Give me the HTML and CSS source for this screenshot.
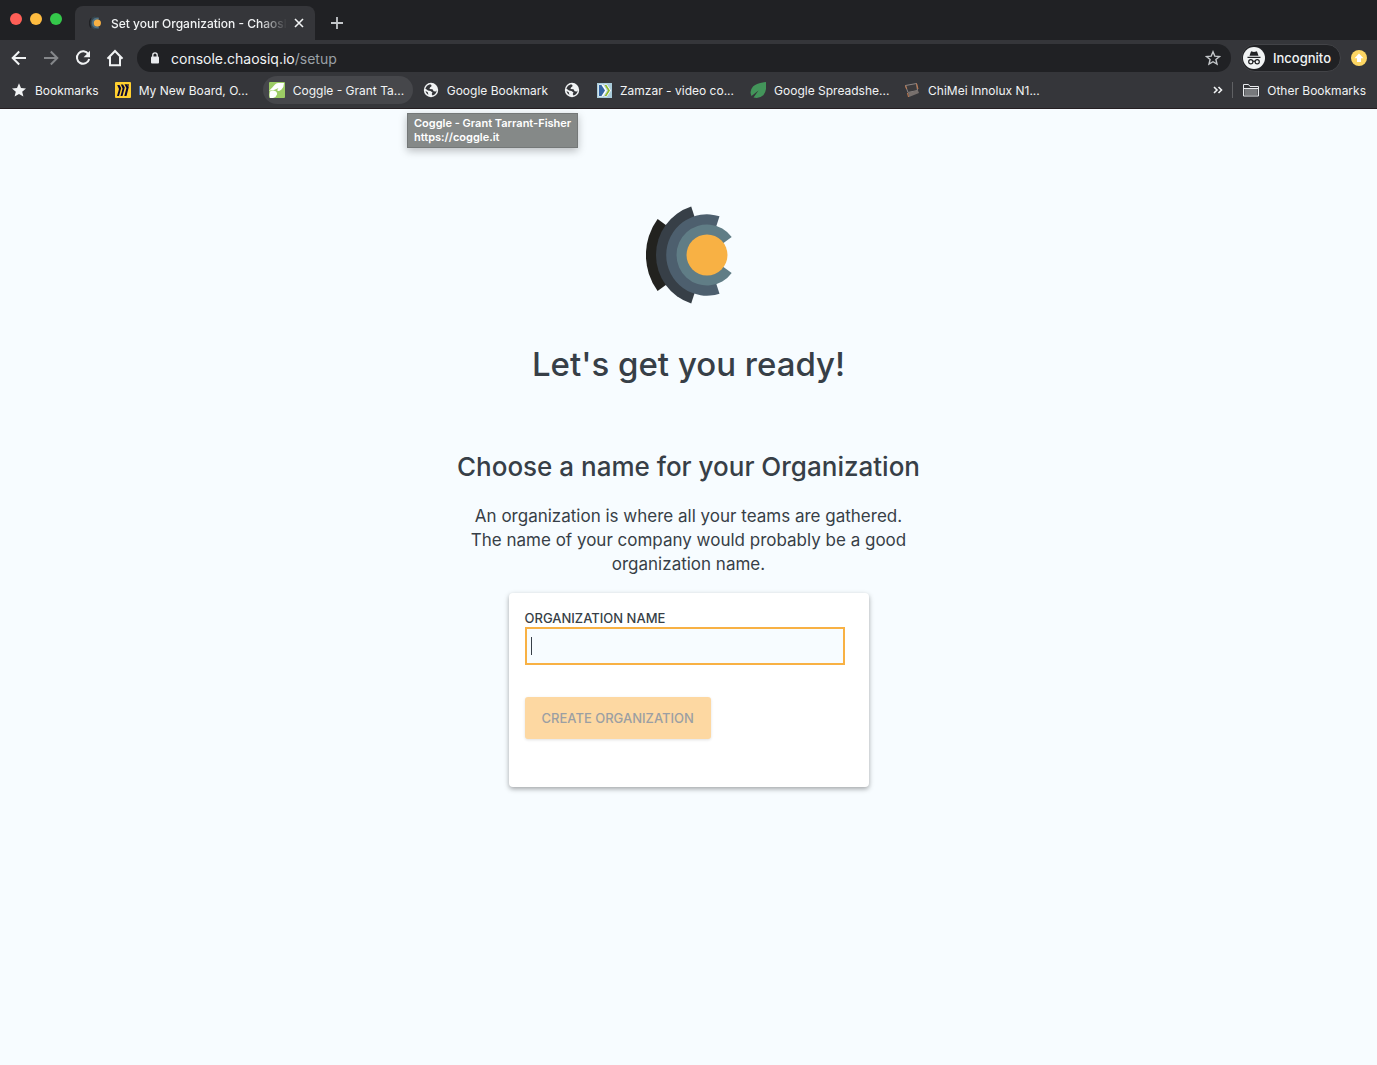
FILE: index.html
```html
<!DOCTYPE html>
<html lang="en">
<head>
<meta charset="utf-8">
<title>Set your Organization - ChaosIQ</title>
<link rel="stylesheet" href="styles.css">
</head>
<body>
<header class="browser">
  <div class="tabstrip">
    <div class="lights">
      <span class="light light-red"></span>
      <span class="light light-yellow"></span>
      <span class="light light-green"></span>
    </div>
    <div class="tab">
      <svg class="favicon" viewBox="-61 -51 102 102" aria-hidden="true">
        <path fill="#202124" d="M0 0L-49.4-35.9A61 61 0 0 0-49.4 35.9Z"/>
        <path fill="#37474f" d="M0 0L-15.8-48.5A51 51 0 0 0-15.8 48.5Z"/>
        <path fill="#4d6f82" d="M0 0L12.5-38.7A40.7 40.7 0 1 0 12.5 38.7Z"/>
        <circle r="26" fill="#f8b144"/>
      </svg>
      <span class="tab-title">Set your Organization - ChaosI</span>
      <button class="icon-button tab-close" aria-label="Close tab">
        <svg width="10" height="10" viewBox="0 0 10 10"><path d="M1 1l8 8M9 1l-8 8" stroke="#f1f3f4" stroke-width="1.6" fill="none"/></svg>
      </button>
    </div>
    <button class="icon-button new-tab" aria-label="New tab">
      <svg width="14" height="14" viewBox="0 0 14 14"><path d="M7 1v12M1 7h12" stroke="#c4c7ca" stroke-width="1.8" fill="none"/></svg>
    </button>
  </div>

  <div class="toolbar">
    <nav class="nav-buttons" aria-label="Browser">
      <button class="icon-button" aria-label="Back"><svg width="16" height="16" viewBox="0 0 16 16"><path d="M15 8H2M8.200 1.500L1.700 8l6.500 6.500" stroke="#f1f3f4" stroke-width="2" fill="none"/></svg></button>
      <button class="icon-button" aria-label="Forward"><svg width="16" height="16" viewBox="0 0 16 16"><path d="M1 8h13M7.800 1.500L14.300 8l-6.500 6.500" stroke="#85878a" stroke-width="2" fill="none"/></svg></button>
      <button class="icon-button" aria-label="Reload"><svg width="16" height="16" viewBox="0 0 16 16"><path d="M13.400 4.200A6.200 6.200 0 1 0 14.200 9" stroke="#f1f3f4" stroke-width="2" fill="none"/><path d="M15 .8v6.400H8.600Z" fill="#f1f3f4"/></svg></button>
      <button class="icon-button" aria-label="Home"><svg width="18" height="18" viewBox="0 0 18 18"><path d="M1.500 9.800L9 2l7.500 7.800M4 8v8.200h10V8" stroke="#f1f3f4" stroke-width="2" fill="none"/></svg></button>
    </nav>
    <div class="address">
      <svg width="10" height="12" viewBox="0 0 10 12" aria-hidden="true"><rect x="1" y="4.500" width="8" height="7" rx="1" fill="#e8eaed"/><path d="M2.800 5V3a2.200 2.200 0 0 1 4.400 0v2" stroke="#e8eaed" stroke-width="1.300" fill="none"/></svg>
      <span class="url">console.chaosiq.io<span class="url-path">/setup</span></span>
      <button class="icon-button bookmark-star" aria-label="Bookmark this page"><svg width="16" height="16" viewBox="0 0 16 16"><path d="M8 1.800l1.800 4.300 4.700.4-3.600 3 1.100 4.600L8 11.700l-4 2.400 1.100-4.600-3.600-3 4.700-.4Z" stroke="#c4c7ca" stroke-width="1.400" fill="none"/></svg></button>
    </div>
    <button class="incognito">
      <svg width="22" height="22" viewBox="0 0 22 22" aria-hidden="true"><circle cx="11" cy="11" r="11" fill="#f1f3f4"/><path fill="#202124" d="M6.500 8.700L7.800 5q.3-.8 1.100-.6l2.100.5 2.100-.5q.8-.2 1.100.6l1.300 3.700ZM4.500 9.700h13v1.200h-13Z"/><g fill="none" stroke="#202124" stroke-width="1.200"><circle cx="7.800" cy="14.700" r="2.100"/><circle cx="14.200" cy="14.700" r="2.100"/><path d="M9.900 14.500q1.100-.8 2.200 0"/></g></svg>
      <span>Incognito</span>
    </button>
    <button class="icon-button" aria-label="Update available"><svg width="16" height="16" viewBox="0 0 16 16"><circle cx="8" cy="8" r="8" fill="#fdd663"/><path fill="#fff" d="M8 3.500l4.500 4.700H10V12H6V8.200H3.500Z"/></svg></button>
  </div>

  <nav class="bookmarks" aria-label="Bookmarks">
    <a class="bookmark" href="#"><svg viewBox="0 0 16 16"><path fill="#f1f3f4" d="M8 1.300l2 4.700 5 .4-3.800 3.300 1.200 4.900L8 12l-4.400 2.600 1.200-4.900L1 6.400 6 6Z"/></svg><span>Bookmarks</span></a>
    <a class="bookmark bookmark-wide" href="#"><svg viewBox="0 0 16 16"><rect width="16" height="16" rx="1" fill="#ffd02f"/><path fill="#0b0733" d="M2.200 3H4.500L6.200 6 4 14H2L4 7ZM5.800 2.500H8L9.800 5.500 7.500 14H5.500L7.600 6.500ZM9.500 2.200h2.300L13.800 5 11.500 14H9.300L11.400 6ZM12 2h1.500l.6 2.500Z"/></svg><span>My New Board, O...</span></a>
    <a class="bookmark bookmark-wide bookmark-hover" href="#"><svg viewBox="0 0 16 16"><rect width="16" height="16" rx="1" fill="#9ccc65"/><path fill="#fff" d="M6 2.500Q7 1 9 1h6q0 4-2.500 6.500Q10 9.500 8.500 9q-.5-1.500 1-3L5 8Q3 8 0 8.800 3.500 5.500 6 2.500ZM1 9.500q3-1.500 5-.5 2.500 1 2 3.500-1 3-4 3.500H1q-1-3 0-6.500Z"/></svg><span>Coggle - Grant Ta...</span></a>
    <a class="bookmark" href="#"><svg viewBox="0 0 16 16"><circle cx="8" cy="8" r="7.200" fill="#f1f3f4"/><path fill="#35363a" d="M7 2.300q2 .3 1.500 1.900L7 5.500 6.500 7l3 .2 1.200 2 2.300.3.7-1.600Q13.500 12 9.500 13.600L8.700 12l.8-1.500L7.500 9 5 8.600 2.300 6.400Q3.400 3.200 7 2.300ZM2.500 9l2.300 1.300.6 2.700Q3 11.800 2.500 9Z"/></svg><span>Google Bookmark</span></a>
    <a class="bookmark" href="#" aria-label="Untitled bookmark"><svg viewBox="0 0 16 16"><circle cx="8" cy="8" r="7.200" fill="#f1f3f4"/><path fill="#35363a" d="M7 2.300q2 .3 1.500 1.900L7 5.500 6.500 7l3 .2 1.200 2 2.300.3.7-1.600Q13.500 12 9.500 13.600L8.700 12l.8-1.500L7.500 9 5 8.600 2.300 6.400Q3.400 3.200 7 2.300ZM2.500 9l2.300 1.300.6 2.700Q3 11.800 2.500 9Z"/></svg></a>
    <a class="bookmark bookmark-wide" href="#"><svg viewBox="0 0 16 16"><rect x="1" y="1" width="15" height="15" fill="#a9cbd9"/><path fill="#fff" d="M2.500 2.500H7L11 8.500 7 14.500H2.500ZM8 2.500h3l4 6-4 6H8l4-6Z"/><path fill="#3465a4" d="M3 3h2.500L9 8.500 5.500 14H3Z"/><path fill="#8cb82b" d="M8.500 3h2L14 8.500 10.500 14h-2L12 8.500Z"/></svg><span>Zamzar - video co...</span></a>
    <a class="bookmark bookmark-wide" href="#"><svg viewBox="0 0 16 16"><path fill="#43955a" d="M16 0Q17 9 13.500 13 9.500 17 3.500 15.500L8.500 8.500 1.500 14Q-1 9 3 4.500 6 1.500 16 0Z"/></svg><span>Google Spreadshe...</span></a>
    <a class="bookmark bookmark-wide" href="#"><svg viewBox="0 0 16 16"><path fill="#3b3a3c" stroke="#8b8584" d="M1.500 3.500L12.500 1.500 13.500 8.500 4 10.500Z"/><path fill="#77706d" d="M4 10.500l10-2 1 2.500-10 4Z"/><path d="M1.500 3.500L2.500 7M3.500 11l1 4M12.500 1.500L14 7" stroke="#c47b50" stroke-width="1" fill="none"/></svg><span>ChiMei Innolux N1...</span></a>
    <div class="bookmarks-end">
      <button class="icon-button more" aria-label="More bookmarks"><svg width="10" height="8" viewBox="0 0 10 8"><path d="M1 1l3 3-3 3M5.500 1l3 3-3 3" stroke="#f1f3f4" stroke-width="1.600" fill="none"/></svg></button>
      <a class="bookmark other" href="#"><svg viewBox="0 0 16 16"><path d="M.5 14V2.500h5l1.500 2h8.500V14Z" fill="#35363a" stroke="#e8eaed"/><path d="M1.500 7h13v6h-13Z" fill="#77797c"/><path d="M.5 6.500h15" stroke="#e8eaed"/></svg><span>Other Bookmarks</span></a>
    </div>
    <div class="tooltip" role="tooltip">Coggle - Grant Tarrant-Fisher<br>https://coggle.it</div>
  </nav>
</header>

<main class="setup">
  <svg class="logo" width="86" height="98" viewBox="-61 -49 86 98" role="img" aria-label="ChaosIQ">
    <path fill="#22221f" d="M0 0L-49.400-35.900A61 61 0 0 0-49.400 35.900Z"/>
    <path fill="#373f47" d="M0 0L-15.800-48.500A51 51 0 0 0-15.800 48.500Z"/>
    <path fill="#4d5f6e" d="M0 0L12.500-38.700A40.700 40.700 0 1 0 12.500 38.700Z"/>
    <path fill="#607d86" d="M0 0L24.700-17.900A30.500 30.500 0 1 0 24.700 17.900Z"/>
    <circle r="20.500" fill="#f8b144"/>
  </svg>
  <h1 class="title">Let's get you ready!</h1>
  <h2 class="subtitle">Choose a name for your Organization</h2>
  <p class="intro">An organization is where all your teams are gathered.<br>The name of your company would probably be a good<br>organization name.</p>
  <form class="card">
    <label class="label" for="org-name">ORGANIZATION NAME</label>
    <input class="field" id="org-name" type="text" autocomplete="off">
    <button class="submit" type="submit" disabled>CREATE ORGANIZATION</button>
  </form>
</main>
</body>
</html>
```
FILE: styles.css
```css
* {
  box-sizing: border-box;
}

body {
  margin: 0;
  min-height: 100vh;
  background: #f7fcff;
  color: #373f47;
  font-family: Inter, "Liberation Sans", sans-serif;
}

svg {
  display: block;
  flex: none;
}

button {
  font: inherit;
}

.icon-button {
  display: flex;
  align-items: center;
  justify-content: center;
  flex: none;
  width: 16px;
  height: 16px;
  padding: 0;
  border: 0;
  background: none;
}

/* Browser window */
.browser {
  background: #35363a;
  border-bottom: 1px solid #251f22;
  color: #f1f3f4;
  font-size: 12px;
}

.tabstrip {
  display: flex;
  align-items: flex-end;
  height: 40px;
  background: #202124;
}

.lights {
  display: flex;
  gap: 8px;
  width: 75px;
  padding: 0 0 15px 10px;
}

.light {
  width: 12px;
  height: 12px;
  border-radius: 50%;
}

.light-red {
  background: #ff5f57;
}

.light-yellow {
  background: #febc40;
}

.light-green {
  background: #34c84a;
}

.tab {
  display: flex;
  align-items: center;
  width: 240px;
  height: 34px;
  padding: 0 8px 0 14px;
  border-radius: 8px 8px 0 0;
  background: #35363a;
}

.favicon {
  width: 14px;
  height: 14px;
  margin-right: 8px;
}

.tab-title {
  flex: 1;
  min-width: 0;
  font-weight: 500;
  white-space: nowrap;
  mask-image: linear-gradient(to right, #000 148px, transparent 176px);
}

.tab-close {
  margin-left: 4px;
}

.new-tab {
  margin: 0 0 9px 14px;
}

.toolbar {
  display: flex;
  align-items: center;
  gap: 10px;
  height: 36px;
  padding: 0 10px;
}

.nav-buttons {
  display: flex;
  gap: 16px;
  padding: 0 4px 0 1px;
}

.address {
  display: flex;
  align-items: center;
  flex: 1;
  gap: 11px;
  height: 28px;
  padding: 0 10px 0 13px;
  border-radius: 14px;
  background: #202124;
  font-size: 14px;
}

.url-path {
  color: #9aa0a6;
}

.bookmark-star {
  margin-left: auto;
}

.incognito {
  display: flex;
  align-items: center;
  gap: 8px;
  height: 28px;
  padding: 0 9px 0 1px;
  border: 1px solid #424347;
  border-radius: 14px;
  background: #202124;
  color: #f1f3f4;
  font-size: 13px;
  font-weight: 500;
}

.bookmarks {
  position: relative;
  display: flex;
  align-items: center;
  gap: 4px;
  height: 32px;
  padding: 0 5px 4px;
}

.bookmark {
  display: flex;
  align-items: center;
  gap: 8px;
  height: 28px;
  padding: 0 6px;
  border-radius: 14px;
  color: #f1f3f4;
  text-decoration: none;
  white-space: nowrap;
}

.bookmark svg {
  width: 16px;
  height: 16px;
}

.bookmark-wide {
  width: 150px;
}

.bookmark-hover {
  background: #46474b;
}

.bookmarks-end {
  display: flex;
  align-items: center;
  margin-left: auto;
}

.more {
  margin-right: 6px;
}

.other {
  height: 16px;
  padding: 0 6px 0 10px;
  border-left: 1px solid #606164;
  border-radius: 0;
}

.tooltip {
  position: absolute;
  top: 37px;
  left: 407px;
  padding: 2px 6px 3px;
  border: 1px solid #747878;
  background: #858988;
  box-shadow: 0 3px 8px rgba(0, 0, 0, 0.25);
  color: #fff;
  font-size: 11px;
  font-weight: 600;
  line-height: 14px;
  white-space: nowrap;
}

/* Setup page */
.setup {
  display: flex;
  flex-direction: column;
  align-items: center;
  padding: 97px 16px 32px;
  text-align: center;
}

.title {
  margin: 40px 0 0;
  font-size: 33px;
  font-weight: 500;
  line-height: 40px;
}

.subtitle {
  margin: 67px 0 0;
  font-size: 26px;
  font-weight: 500;
  line-height: 32px;
}

.intro {
  margin: 21px 0 0;
  font-size: 17px;
  line-height: 24px;
}

.card {
  display: flex;
  flex-direction: column;
  align-items: flex-start;
  width: 100%;
  max-width: 360px;
  margin-top: 17px;
  padding: 16px 24px 48px 16px;
  border-radius: 4px;
  background: #fff;
  box-shadow: 0 2px 5px rgba(0, 0, 0, 0.35);
}

.label {
  font-size: 13px;
  font-weight: 500;
  line-height: 18px;
}

.field {
  width: 100%;
  height: 38px;
  padding: 0 4px;
  border: 2px solid #f8b144;
  border-radius: 0;
  outline: 0;
  background: linear-gradient(#373f47, #373f47) 4px center / 1px 18px no-repeat #f7fcff;
  font: inherit;
  font-size: 16px;
}

.submit {
  height: 42px;
  margin-top: 32px;
  padding: 0 17px;
  border: 0;
  border-radius: 3px;
  background: #fdd8a2;
  box-shadow: 0 1px 3px rgba(0, 0, 0, 0.12);
  color: #9b9fa3;
  font-size: 13px;
  font-weight: 500;
}
```
